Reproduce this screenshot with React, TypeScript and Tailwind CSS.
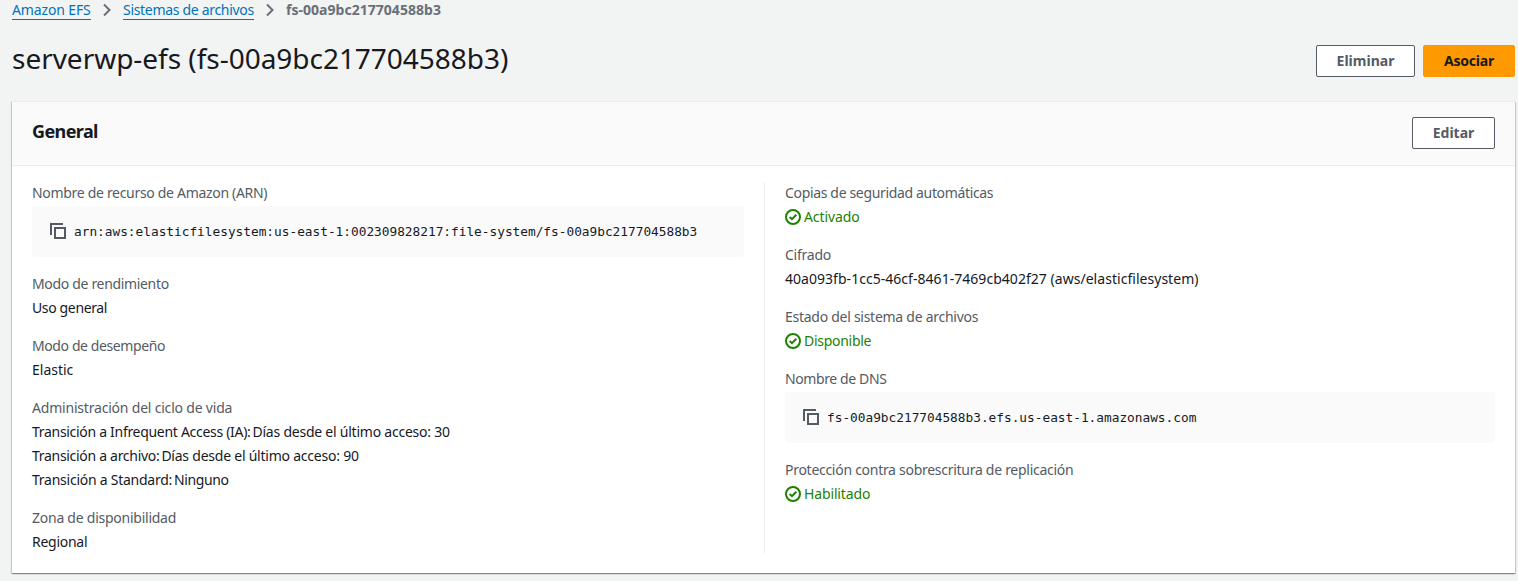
import type { ReactNode } from "react";

function Chevron() {
  return (
    <svg viewBox="0 0 8 14" className="h-3.5 w-2 shrink-0" fill="none" stroke="#687078" strokeWidth="2">
      <path d="M1 1.5 6.5 7 1 12.5" />
    </svg>
  );
}

function CopyIcon() {
  return (
    <svg viewBox="0 0 16 16" className="mb-px size-4 shrink-0" fill="none" stroke="#545b64" strokeWidth="2">
      <path d="M5 5h10v10H5z" />
      <path d="M13 1H1v11" />
    </svg>
  );
}

function CheckIcon() {
  return (
    <svg viewBox="0 0 16 16" className="size-4 shrink-0" fill="none" stroke="#1d8102" strokeWidth="2">
      <circle cx="8" cy="8" r="7" />
      <path d="M4.6 8 7 10.2 11.3 5.8" />
    </svg>
  );
}

function Field({ label, tracking, children }: { label: string; tracking: string; children: ReactNode }) {
  return (
    <div>
      <div className={`text-[#545b64] ${tracking}`}>{label}</div>
      {children}
    </div>
  );
}

function Status({ text, tracking }: { text: string; tracking: string }) {
  return (
    <div className="flex items-center gap-[3px] text-[#1d8102]">
      <CheckIcon />
      <span className={tracking}>{text}</span>
    </div>
  );
}

function CodeBox({ text }: { text: string }) {
  return (
    <div className="my-px flex h-[51px] items-center gap-2 rounded bg-[#fafafa] pr-4 pl-[18px]">
      <CopyIcon />
      <code className="font-['DejaVu_Sans_Mono',monospace] text-[12.8px] tracking-[-0.01px]">{text}</code>
    </div>
  );
}

const button = "flex h-8 items-center justify-center rounded-xs border text-sm font-bold";

export default function App() {
  return (
    <div className="h-[581px] w-full overflow-hidden bg-[#f2f3f3] pr-[3px] pl-3 font-['Noto_Sans',sans-serif] text-sm leading-6 whitespace-nowrap text-[#16191f]">
      <nav className="flex h-5 items-center gap-3">
        <a className="h-5 w-[79px] border-b border-[#0073bb] leading-5 tracking-[-0.13px] text-[#0073bb]">Amazon EFS</a>
        <Chevron />
        <a className="h-5 w-[131px] border-b border-[#0073bb] leading-5 tracking-[-0.31px] text-[#0073bb]">Sistemas de archivos</a>
        <Chevron />
        <span className="leading-5 font-bold tracking-[0.03px] text-[#687078]">fs-00a9bc217704588b3</span>
      </nav>

      <header className="flex h-[81px] items-start justify-between pt-[25px]">
        <h1 className="-mt-[5px] text-[28px] leading-9 tracking-[-0.03px]">serverwp-efs (fs-00a9bc217704588b3)</h1>
        <div className="flex gap-2">
          <button className={`${button} w-[99px] border-[#545b64] bg-white text-[#545b64]`}>Eliminar</button>
          <button className={`${button} w-[92px] border-[#ff9900] bg-[#ff9900] tracking-[-0.2px]`}>Asociar</button>
        </div>
      </header>

      <section className="h-[472px] border-t border-[#eaeded] bg-white shadow-[0_1px_1px_0_rgba(0,28,36,0.3),1px_1px_1px_0_rgba(0,28,36,0.15),-1px_1px_1px_0_rgba(0,28,36,0.15)]">
        <div className="flex h-16 items-start justify-between border-b border-[#eaeded] bg-[#fafafa] px-5 pt-[15px]">
          <h2 className="mt-[2px] text-lg leading-6 font-bold tracking-[-0.6px]">General</h2>
          <button className={`${button} w-[83px] border-[#545b64] bg-white text-[#545b64]`}>Editar</button>
        </div>

        <div className="flex px-5 pt-4">
          <div className="-mt-px flex w-[712px] flex-col gap-3.5">
            <Field label="Nombre de recurso de Amazon (ARN)" tracking="tracking-[-0.31px]">
              <CodeBox text="arn:aws:elasticfilesystem:us-east-1:002309828217:file-system/fs-00a9bc217704588b3" />
            </Field>
            <Field label="Modo de rendimiento" tracking="tracking-[-0.33px]">
              <div className="tracking-[-0.36px]">Uso general</div>
            </Field>
            <Field label="Modo de desempeño" tracking="tracking-[-0.4px]">
              <div>Elastic</div>
            </Field>
            <Field label="Administración del ciclo de vida" tracking="tracking-[-0.2px]">
              <div className="flex gap-0.5">
                <span className="tracking-[-0.3px]">Transición a Infrequent Access (IA):</span>
                <span className="tracking-[-0.23px]">Días desde el último acceso: 30</span>
              </div>
              <div className="flex gap-0.5">
                <span className="tracking-[-0.3px]">Transición a archivo:</span>
                <span className="tracking-[-0.23px]">Días desde el último acceso: 90</span>
              </div>
              <div className="flex gap-0.5">
                <span className="tracking-[-0.25px]">Transición a Standard:</span>
                <span className="tracking-[-0.4px]">Ninguno</span>
              </div>
            </Field>
            <Field label="Zona de disponibilidad" tracking="tracking-[-0.25px]">
              <div className="tracking-[-0.27px]">Regional</div>
            </Field>
          </div>

          <div className="ml-5 h-[371px] w-px bg-[#eaeded]" />

          <div className="-mt-px ml-5 flex flex-1 flex-col gap-3.5">
            <Field label="Copias de seguridad automáticas" tracking="tracking-[-0.34px]">
              <Status text="Activado" tracking="tracking-[-0.1px]" />
            </Field>
            <Field label="Cifrado" tracking="tracking-[-0.24px]">
              <div className="tracking-[0.035px]">40a093fb-1cc5-46cf-8461-7469cb402f27 (aws/elasticfilesystem)</div>
            </Field>
            <Field label="Estado del sistema de archivos" tracking="tracking-[-0.27px]">
              <Status text="Disponible" tracking="tracking-[-0.28px]" />
            </Field>
            <Field label="Nombre de DNS" tracking="tracking-[-0.39px]">
              <CodeBox text="fs-00a9bc217704588b3.efs.us-east-1.amazonaws.com" />
            </Field>
            <Field label="Protección contra sobrescritura de replicación" tracking="tracking-[-0.28px]">
              <Status text="Habilitado" tracking="tracking-[-0.14px]" />
            </Field>
          </div>
        </div>
      </section>
    </div>
  );
}
